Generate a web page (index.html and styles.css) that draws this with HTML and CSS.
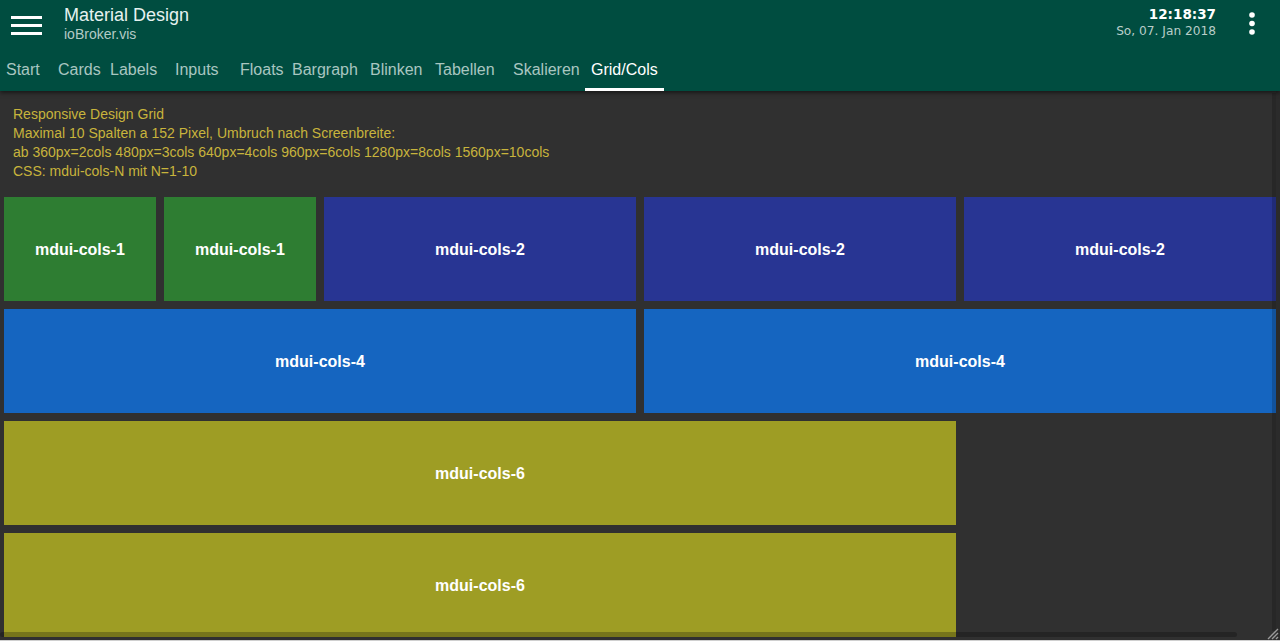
FILE: index.html
```html
<!DOCTYPE html>
<html lang="de">
<head>
<meta charset="utf-8">
<title>Material Design - ioBroker.vis</title>
<link rel="stylesheet" href="styles.css">
</head>
<body>
<div class="app">
  <header class="appbar">
    <div class="toolbar">
      <button class="menu-btn" aria-label="Menü">
        <svg width="31" height="20" viewBox="0 0 31 20"><rect x="0" y="0" width="31" height="3" fill="#fff"/><rect x="0" y="8" width="31" height="3" fill="#fff"/><rect x="0" y="16" width="31" height="3" fill="#fff"/></svg>
      </button>
      <div class="titles">
        <div class="title">Material Design</div>
        <div class="subtitle">ioBroker.vis</div>
      </div>
      <div class="clock">
        <div class="time">12:18:37</div>
        <div class="date">So, 07. Jan 2018</div>
      </div>
      <button class="more-btn" aria-label="Mehr">
        <svg width="8" height="24" viewBox="0 0 8 24"><circle cx="4" cy="3" r="2.8" fill="#fff"/><circle cx="4" cy="11.5" r="2.8" fill="#fff"/><circle cx="4" cy="20" r="2.8" fill="#fff"/></svg>
      </button>
    </div>
    <nav class="tabs">
      <a class="tab w4">Start</a>
      <a class="tab w4">Cards</a>
      <a class="tab w5">Labels</a>
      <a class="tab w5">Inputs</a>
      <a class="tab w4">Floats</a>
      <a class="tab w6">Bargraph</a>
      <a class="tab w5">Blinken</a>
      <a class="tab w6">Tabellen</a>
      <a class="tab w6">Skalieren</a>
      <a class="tab w6 active">Grid/Cols</a>
    </nav>
  </header>
  <main class="content">
    <div class="info">
      <div>Responsive Design Grid</div>
      <div>Maximal 10 Spalten a 152 Pixel, Umbruch nach Screenbreite:</div>
      <div>ab 360px=2cols 480px=3cols 640px=4cols 960px=6cols 1280px=8cols 1560px=10cols</div>
      <div>CSS: mdui-cols-N mit N=1-10</div>
    </div>
    <div class="grid">
      <div class="tile cols-1">mdui-cols-1</div>
      <div class="tile cols-1">mdui-cols-1</div>
      <div class="tile cols-2">mdui-cols-2</div>
      <div class="tile cols-2">mdui-cols-2</div>
      <div class="tile cols-2">mdui-cols-2</div>
      <div class="tile cols-4">mdui-cols-4</div>
      <div class="tile cols-4">mdui-cols-4</div>
      <div class="tile cols-6">mdui-cols-6</div>
      <div class="tile cols-6">mdui-cols-6</div>
    </div>
    <div class="vscroll"></div>
    <div class="vscroll-edge"></div>
    <div class="hscroll"></div>
    <div class="grip">
      <svg width="14" height="14" viewBox="0 0 14 14"><path d="M13 3 L3 13 M13 7 L7 13 M13 11 L11 13" stroke="#9a9a9a" stroke-width="1.4" fill="none"/></svg>
    </div>
    <div class="bottom-line"></div>
  </main>
</div>
</body>
</html>
```
FILE: styles.css
```css
* { box-sizing: border-box; }
html, body { margin: 0; padding: 0; }
body {
  width: 1280px;
  height: 641px;
  overflow: hidden;
  background: #303030;
  font-family: "Liberation Sans", Arial, sans-serif;
}
.app {
  height: 641px;
  display: flex;
  flex-direction: column;
}
.appbar {
  height: 91px;
  flex: none;
  background: #004d40;
  box-shadow: 0 2px 4px rgba(0,0,0,0.5);
  position: relative;
  z-index: 2;
}
.toolbar {
  height: 50px;
  display: flex;
  align-items: flex-start;
}
.menu-btn {
  border: 0;
  background: none;
  padding: 0;
  margin: 16px 0 0 11px;
  width: 31px;
  height: 20px;
  display: block;
}
.menu-btn svg { display: block; }
.titles {
  margin-left: 22px;
  padding-top: 5px;
  flex: 1;
}
.title {
  font-size: 18px;
  line-height: 20px;
  color: #e6f2f0;
}
.subtitle {
  font-size: 14px;
  line-height: 18px;
  color: #b3cbc6;
}
.clock {
  text-align: right;
  padding-top: 6px;
  font-family: "DejaVu Sans", Verdana, sans-serif;
}
.time {
  font-size: 13.5px;
  font-weight: bold;
  line-height: 17px;
  color: #ffffff;
}
.date {
  font-size: 12.2px;
  line-height: 17px;
  color: #b9cdc9;
}
.more-btn {
  border: 0;
  background: none;
  padding: 0;
  margin: 12px 24px 0 32px;
  width: 8px;
  height: 24px;
}
.more-btn svg { display: block; }
.tabs {
  display: flex;
  height: 41px;
}
.tab {
  display: block;
  padding: 2px 0 0 6px;
  font-size: 16px;
  line-height: 36px;
  height: 41px;
  color: #a9c6c0;
  border-bottom: 3px solid transparent;
  white-space: nowrap;
}
.tab.w4 { width: 52px; }
.tab.w5 { width: 65px; }
.tab.w6 { width: 78px; }
.tab.active {
  width: 79px;
  color: #ffffff;
  border-bottom-color: #ffffff;
}
.content {
  flex: 1;
  position: relative;
  overflow: hidden;
}
.info {
  padding: 14px 13px 0;
  font-size: 14px;
  line-height: 19px;
  color: #c8b43c;
}
.grid {
  margin-top: 16px;
  padding-left: 4px;
  display: grid;
  grid-template-columns: repeat(8, 152px);
  grid-auto-rows: 104px;
  gap: 8px;
}
.tile {
  display: flex;
  align-items: center;
  justify-content: center;
  padding-top: 2px;
  color: #ffffff;
  font-weight: bold;
  font-size: 16px;
}
.cols-1 { grid-column: span 1; background: #2e7d32; }
.cols-2 { grid-column: span 2; background: #283593; }
.cols-4 { grid-column: span 4; background: #1565c0; }
.cols-6 { grid-column: span 6; background: #9e9d24; }
.vscroll {
  position: absolute;
  right: 4px;
  top: 2px;
  bottom: 10px;
  width: 4px;
  background: rgba(0,0,0,0.18);
}
.vscroll-edge {
  position: absolute;
  right: 0;
  top: 0;
  bottom: 0;
  width: 4px;
  background: #2b2b2b;
}
.hscroll {
  position: absolute;
  left: 0;
  bottom: 4px;
  width: 1237px;
  height: 5px;
  border-radius: 3px;
  background: rgba(0,0,0,0.25);
}
.grip {
  position: absolute;
  right: 1px;
  bottom: 1px;
  width: 14px;
  height: 14px;
}
.grip svg { display: block; }
.bottom-line {
  position: absolute;
  left: 0;
  right: 0;
  bottom: 0;
  height: 1px;
  background: #d0d0d0;
}
```
